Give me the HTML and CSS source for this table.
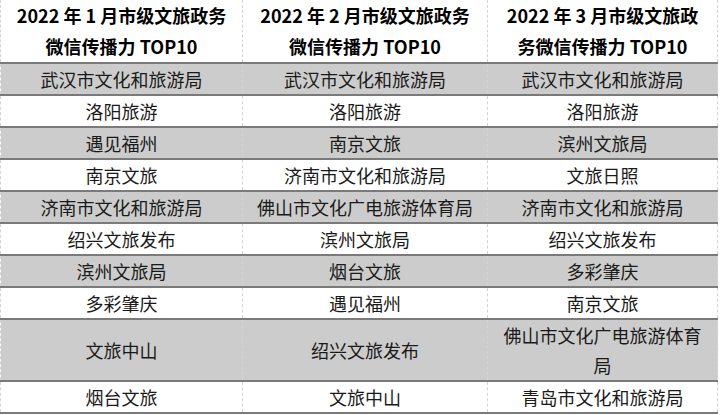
FILE: index.html
```html
<!DOCTYPE html>
<html lang="zh">
<head>
<meta charset="utf-8">
<link rel="stylesheet" href="styles.css">
</head>
<body>
<table class="rank">
  <colgroup><col class="c1"><col class="c2"><col class="c3"></colgroup>
  <thead>
    <tr><th>2022 年 1 月市级文旅政务<br>微信传播力 TOP10</th><th>2022 年 2 月市级文旅政务<br>微信传播力 TOP10</th><th>2022 年 3 月市级文旅政<br>务微信传播力 TOP10</th></tr>
  </thead>
  <tbody>
    <tr class="g"><td>武汉市文化和旅游局</td><td>武汉市文化和旅游局</td><td>武汉市文化和旅游局</td></tr>
    <tr><td>洛阳旅游</td><td>洛阳旅游</td><td>洛阳旅游</td></tr>
    <tr class="g"><td>遇见福州</td><td>南京文旅</td><td>滨州文旅局</td></tr>
    <tr><td>南京文旅</td><td>济南市文化和旅游局</td><td>文旅日照</td></tr>
    <tr class="g"><td>济南市文化和旅游局</td><td>佛山市文化广电旅游体育局</td><td>济南市文化和旅游局</td></tr>
    <tr><td>绍兴文旅发布</td><td>滨州文旅局</td><td>绍兴文旅发布</td></tr>
    <tr class="g"><td>滨州文旅局</td><td>烟台文旅</td><td>多彩肇庆</td></tr>
    <tr><td>多彩肇庆</td><td>遇见福州</td><td>南京文旅</td></tr>
    <tr class="g"><td>文旅中山</td><td>绍兴文旅发布</td><td>佛山市文化广电旅游体育<br>局</td></tr>
    <tr><td>烟台文旅</td><td>文旅中山</td><td>青岛市文化和旅游局</td></tr>
  </tbody>
</table>
</body>
</html>
```
FILE: styles.css
```css
html, body {
  margin: 0;
  padding: 0;
  background: #ffffff;
}
body {
  font-family: "Noto Sans CJK SC", "Liberation Sans", sans-serif;
  color: #1a1a1a;
}
.rank {
  border-collapse: collapse;
  width: 717px;
  table-layout: fixed;
}
.c1 { width: 242px; }
.c2 { width: 245px; }
.c3 { width: 230px; }
.rank th, .rank td {
  padding: 0;
  text-align: center;
  vertical-align: middle;
  border-left: 1px dashed #d4d4d4;
  border-right: 1px dashed #d4d4d4;
  border-bottom: 2px solid #7a7a7a;
}
.rank th {
  font-weight: bold;
  font-size: 18px;
  line-height: 31px;
  color: #000;
}
.rank td {
  font-size: 18px;
  line-height: 30px;
  font-weight: normal;
}
.rank tr.g td {
  background: #cccccc;
}
```
